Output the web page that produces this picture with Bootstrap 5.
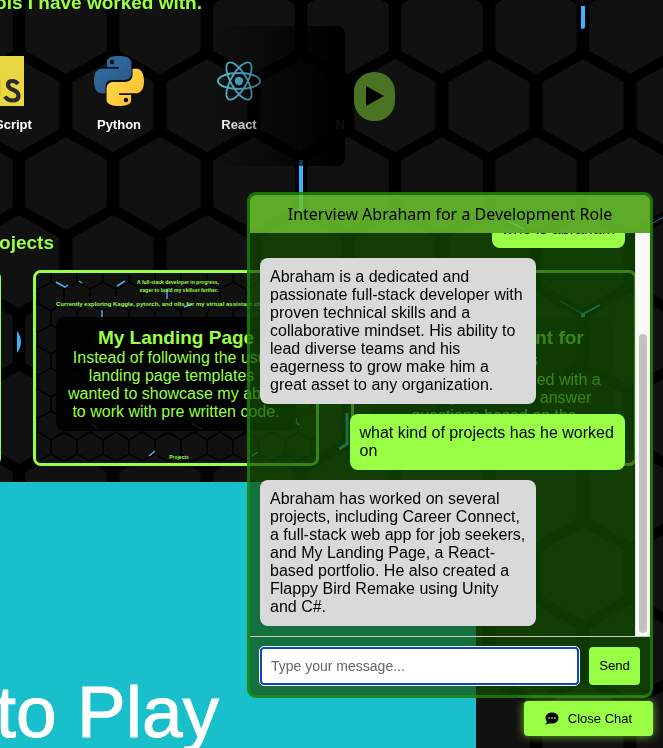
<!DOCTYPE html>
<html lang="en">
<head>
<meta charset="utf-8">
<meta name="viewport" content="width=device-width, initial-scale=1">
<title>Abraham – Portfolio</title>
<link href="https://cdn.jsdelivr.net/npm/bootstrap@5.3.0/dist/css/bootstrap.min.css" rel="stylesheet">
<style>
:root{--lime:#99ff45}
body{background:#000;color:var(--lime);font-family:"Liberation Sans",Arial,sans-serif;font-size:16px;line-height:18px;overflow:hidden;min-height:100vh}
.hex-bg{position:fixed;inset:0;width:100%;height:100%;z-index:-1}
.sec-title{font-size:19px;line-height:20px;font-weight:700;margin:0;white-space:nowrap}
.tools-title{width:202px;margin-top:-7px}
.proj-title{width:54px}
.tools-row{height:140px;margin-top:13px;gap:9px}
.strip{width:345px;height:140px;overflow:hidden;border-radius:0 8px 8px 0;position:relative}
.strip::after{content:"";position:absolute;right:0;top:0;bottom:0;width:130px;background:linear-gradient(90deg,transparent,rgba(0,0,0,.95) 90%)}
.strip-inner{margin-left:-61px}
.tool{width:120px;flex:none;padding-top:30px;color:#fff;font-size:13px;line-height:16px;font-weight:700}
.tool svg{width:50px;height:50px;margin-bottom:11px}
.play{width:41px;height:49px;border-radius:20px;background:#487424}
.play svg{width:18px;height:22px}
.projects{padding-top:51px}
.cards{margin-left:-285px;gap:32px;margin-top:17px}
.proj{width:286px;height:196px;flex:none;border:3px solid var(--lime);border-radius:8px;overflow:hidden;position:relative;background:#0b0b0b}
.proj-art{position:absolute;inset:0;width:100%;height:100%}
.proj-panel{position:relative;margin:44px 20px 0;padding:10px 10px 0;height:114px;border-radius:8px;background:rgba(0,0,0,.85);overflow:hidden;white-space:nowrap}
.proj-plain .proj-panel{background:rgba(0,0,0,.2)}
.proj-panel h3{font-size:19px;line-height:22px;font-weight:700;margin:0}
.proj-panel p{margin:0}
.game{width:476px;height:266px;margin-top:16px;background:#1abfcc;color:#fff;font-size:73px;line-height:80px;padding-top:190px;overflow:hidden;-webkit-text-stroke:1px #fff}
.game-title{width:219px;white-space:nowrap}
.chat-wrap{position:fixed;right:10px;bottom:12px;z-index:10;color:#000}
.chat{width:406px;height:506px;border:3px solid rgba(36,150,12,.62);border-radius:9px;background:rgba(18,80,0,.7);overflow:hidden}
.chat-head{background:rgba(153,255,69,.57);font-family:"Noto Sans",sans-serif;font-size:16px;line-height:22px;padding:8px;margin:0;font-weight:400}
.chat-log{min-height:0;border-bottom:1px solid #ccc}
.msgs{gap:10px;padding:10px;min-height:0;overflow:hidden}
.msg{box-sizing:content-box;max-width:70%;padding:10px;border-radius:8px;background:#d9d9d9;flex:none}
.msg-me{background:var(--lime);align-self:flex-end}
.scrolltrack{width:15px;background:#fafafa;border-left:1px solid #e6e6e6;padding:101px 3px 3px;flex:none}
.scrollthumb{background:#c1c1c1;border-radius:4px}
.chat-form{padding:10px;gap:10px}
.chat-in{min-width:0;height:38px;border:2px solid #0b47c1;outline:1px solid #fff;border-radius:4px;padding:0 9px;font-size:14px;color:#000;background:#fff}
.chat-in::placeholder{color:#666}
.btn-lime{background:var(--lime);color:#000;border:0;border-radius:4px;font-size:13px;line-height:18px;padding:10px;min-width:51px}
.btn-close-chat{padding:8px 20px;height:35px;min-width:129px;gap:9px;margin-top:3px;box-shadow:0 0 10px rgba(153,255,69,.7)}
.btn-close-chat svg{width:14px;height:13px}
</style>
</head>
<body>
<svg class="hex-bg" aria-hidden="true">
<defs>
<pattern id="hex" width="94" height="156" patternUnits="userSpaceOnUse" patternTransform="translate(66 59)">
<path fill="#111" d="M47 0 87.500 23V70L47 93 6.500 70V23ZM0 78 40.500 101V148L0 171-40.500 148V101ZM94 78 134.500 101V148L94 171 53.500 148V101ZM0-78 40.500-55V-8L0 15-40.500-8V-55ZM94-78 134.500-55V-8L94 15 53.500-8V-55Z"/>
</pattern>
<pattern id="minihex" width="26" height="43" patternUnits="userSpaceOnUse" patternTransform="translate(2 9)">
<path fill="none" stroke="#000" stroke-width="1.500" d="M13 0 26 7V21L13 29 0 21V7ZM13 29V43M0 7V21"/>
</pattern>
</defs>
<rect width="100%" height="100%" fill="url(#hex)"/>
<path fill="#3bb2ff" d="M299 160h4v52h-4zM581 6h4v22q-2 1-4 1zM17 331q8 11 0 22zM581 313h4v4h-4z"/>
<path stroke="#2a79b0" fill="none" d="M648 226 663 217M560 301 583 314"/>
<path stroke="#3bb2ff" stroke-width="3" fill="none" d="M347 413V444L339 449"/>
<path stroke="#3bb2ff" stroke-width="1.500" fill="none" d="M504 219 524 229M583 314 600 305"/>
</svg>

<main>
<section>
<h2 class="sec-title tools-title d-flex justify-content-end">tools I have worked with.</h2>
<div class="tools-row d-flex align-items-center">
<div class="strip">
<div class="strip-inner d-flex text-center">
<div class="tool"><svg viewBox="0 0 50 50" aria-hidden="true"><path fill="#e9d641" d="M0 0h50v50H0z"/><path fill="none" stroke="#2b2b2b" stroke-width="4.200" d="M24 23V40Q24 44.500 19.500 44.500 15.500 44.500 14 40.500M44 28Q42 25 38.500 25 34 25 34 28.500 34 32 39 33.800 44.500 36 44.500 39.800 44.500 44.500 38.500 44.500 33.500 44.500 31 40.500"/></svg><div>JavaScript</div></div>
<div class="tool"><svg viewBox="0 0 110 110" aria-hidden="true"><defs><linearGradient id="pb" x2="1" y2="1"><stop stop-color="#3070a8"/><stop offset="1" stop-color="#2b5580"/></linearGradient><linearGradient id="py" x2="1" y2="1"><stop stop-color="#ffe052"/><stop offset="1" stop-color="#ffb92b"/></linearGradient></defs><path fill="url(#pb)" d="M54.300 0C26.800 0 28.500 12 28.500 12v12.400h26.300V28H18.100S0 26 0 54.400s15.800 27.300 15.800 27.300h9.400V68.500s-.5-15.800 15.500-15.800h26.700s15 .2 15-14.500V14.400S84.700 0 54.300 0ZM39.700 8.500a4.800 4.800 0 1 1 0 9.600 4.800 4.800 0 0 1 0-9.600Z"/><path fill="url(#py)" d="M55.700 110c27.500 0 25.800-12 25.800-12V85.600H55.200V82h36.700s18.100 2 18.100-26.400-15.800-27.300-15.800-27.300h-9.400v13.200s.5 15.800-15.500 15.800H42.600s-15-.2-15 14.500v23.800S25.300 110 55.700 110Zm14.600-8.500a4.800 4.800 0 1 1 0-9.600 4.800 4.800 0 0 1 0 9.600Z"/></svg><div>Python</div></div>
<div class="tool"><svg viewBox="-25 -25 50 50" aria-hidden="true"><g fill="none" stroke="#53c1de" stroke-width="1.800"><ellipse rx="21" ry="8"/><ellipse rx="21" ry="8" transform="rotate(60)"/><ellipse rx="21" ry="8" transform="rotate(120)"/></g><circle r="4.200" fill="#53c1de"/></svg><div>React</div></div>
<div class="tool"><svg viewBox="0 0 50 50" aria-hidden="true"></svg><div>Node.js</div></div>
</div>
</div>
<button class="play border-0 p-0 d-flex align-items-center justify-content-center" type="button" aria-label="Next tools"><svg viewBox="0 0 18 22" aria-hidden="true"><path d="M0 1 18 11 0 21Z"/></svg></button>
</div>
</section>

<section class="projects">
<h2 class="sec-title proj-title d-flex justify-content-end mt-3">Projects</h2>
<div class="cards d-flex">
<article class="proj"></article>
<article class="proj text-center">
<svg class="proj-art" viewBox="0 0 280 190" aria-hidden="true"><rect width="280" height="190" fill="#111"/><rect width="280" height="190" fill="url(#minihex)"/>
<path stroke="#3bb2ff" fill="none" stroke-width="1.500" d="M20 9 29 14 32 12M43 8 46 10M81 13 89 8M131 16V26M66 37V44M148 34 156 31M55 151 61 155M156 151 166 156M113 183 119 178M216 183 222 179M260 149V145M260 149 257 152M260 149 263 152"/>
<g fill="#99ff45" font-size="5" font-weight="700" text-anchor="middle"><text x="142" y="11">A full-stack developer in progress,</text><text x="143" y="19">eager to build my skillset further.</text><text x="143" y="33" font-size="6">Currently exploring Kaggle, pytorch, and nlts for my virtual assistant chatbot. Develop</text><text x="143" y="186">Projects</text></g></svg>
<div class="proj-panel"><h3>My Landing Page</h3><p>Instead of following the usual<br>landing page templates I<br>wanted to showcase my ability<br>to work with pre written code.</p></div>
</article>
<article class="proj proj-plain text-center bg-transparent">
<div class="proj-panel"><h3>Virtual Assistant for<br>Portfolios</h3><p>A chatbot that is trained with a<br>resume, it is able to answer<br>questions based on the</p></div>
</article>
</div>
</section>

<section class="game"><div class="game-title d-flex justify-content-end">Click to Play</div></section>
</main>

<aside class="chat-wrap d-flex flex-column align-items-end">
<div class="chat d-flex flex-column">
<h2 class="chat-head text-center">Interview Abraham for a Development Role</h2>
<div class="chat-log d-flex flex-grow-1">
<div class="msgs d-flex flex-column justify-content-end align-items-start flex-grow-1">
<div class="msg msg-me">who is abraham</div>
<div class="msg">Abraham is a dedicated and passionate full-stack developer with proven technical skills and a collaborative mindset. His ability to lead diverse teams and his eagerness to grow make him a great asset to any organization.</div>
<div class="msg msg-me">what kind of projects has he worked on</div>
<div class="msg">Abraham has worked on several projects, including Career Connect, a full-stack web app for job seekers, and My Landing Page, a React-based portfolio. He also created a Flappy Bird Remake using Unity and C#.</div>
</div>
<div class="scrolltrack d-flex"><div class="scrollthumb flex-grow-1"></div></div>
</div>
<form class="chat-form d-flex">
<input class="chat-in flex-grow-1" type="text" placeholder="Type your message..." aria-label="Type your message" autofocus>
<button class="btn-lime" type="button">Send</button>
</form>
</div>
<button class="btn-lime btn-close-chat d-flex align-items-center justify-content-center" type="button"><svg viewBox="0 0 26 24" aria-hidden="true"><path d="M13 1C6 1 1 5 1 11c0 3 1 5 3 7-1 2-2 3-3 4v1c3 0 6-1 8-2 8 2 16-2 16-10C25 5 20 1 13 1Z"/><g fill="#99ff45"><circle cx="7.500" cy="11" r="1.600"/><circle cx="13" cy="11" r="1.600"/><circle cx="18.500" cy="11" r="1.600"/></g></svg>Close Chat</button>
</aside>
<script src="https://cdn.jsdelivr.net/npm/bootstrap@5.3.0/dist/js/bootstrap.bundle.min.js"></script>
</body>
</html>
